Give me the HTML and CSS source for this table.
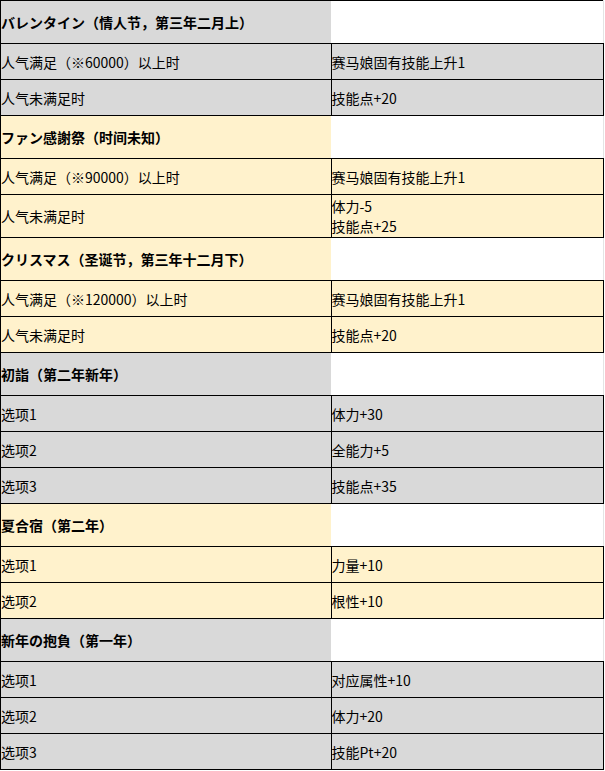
FILE: index.html
```html
<!DOCTYPE html>
<html lang="zh">
<head>
<meta charset="utf-8">
<title>活动事件</title>
<link rel="stylesheet" href="styles.css">
</head>
<body>
<table class="events">
  <tr class="head grey"><td class="name">バレンタイン（情人节，第三年二月上）</td><td class="blank"></td></tr>
  <tr class="row grey"><td>人气满足（※60000）以上时</td><td>赛马娘固有技能上升1</td></tr>
  <tr class="row grey"><td>人气未满足时</td><td>技能点+20</td></tr>

  <tr class="head cream"><td class="name">ファン感謝祭（时间未知）</td><td class="blank"></td></tr>
  <tr class="row cream"><td>人气满足（※90000）以上时</td><td>赛马娘固有技能上升1</td></tr>
  <tr class="row cream tall"><td>人气未满足时</td><td>体力-5<br>技能点+25</td></tr>

  <tr class="head cream"><td class="name">クリスマス（圣诞节，第三年十二月下）</td><td class="blank"></td></tr>
  <tr class="row cream"><td>人气满足（※120000）以上时</td><td>赛马娘固有技能上升1</td></tr>
  <tr class="row cream"><td>人气未满足时</td><td>技能点+20</td></tr>

  <tr class="head grey"><td class="name">初詣（第二年新年）</td><td class="blank"></td></tr>
  <tr class="row grey"><td>选项1</td><td>体力+30</td></tr>
  <tr class="row grey"><td>选项2</td><td>全能力+5</td></tr>
  <tr class="row grey"><td>选项3</td><td>技能点+35</td></tr>

  <tr class="head cream"><td class="name">夏合宿（第二年）</td><td class="blank"></td></tr>
  <tr class="row cream"><td>选项1</td><td>力量+10</td></tr>
  <tr class="row cream"><td>选项2</td><td>根性+10</td></tr>

  <tr class="head grey"><td class="name">新年の抱負（第一年）</td><td class="blank"></td></tr>
  <tr class="row grey"><td>选项1</td><td>对应属性+10</td></tr>
  <tr class="row grey"><td>选项2</td><td>体力+20</td></tr>
  <tr class="row grey"><td>选项3</td><td>技能Pt+20</td></tr>
</table>
</body>
</html>
```
FILE: styles.css
```css
html, body {
  margin: 0;
  padding: 0;
  background: #ffffff;
}

.events {
  border-collapse: collapse;
  width: 604px;
  table-layout: fixed;
  font-family: "Noto Sans CJK SC", "Noto Sans CJK JP", sans-serif;
  font-size: 14px;
  line-height: 20px;
  color: #000;
}

.events td {
  padding: 0;
  vertical-align: middle;
  border: 1px solid #000;
  white-space: nowrap;
  overflow: hidden;
}

.events td:first-child {
  width: 330px;
}

.row td {
  height: 35px;
}

.tall td {
  height: 42px;
}

.head td {
  height: 42px;
}

.head .name {
  font-weight: bold;
  border-right: none;
}

.head .blank {
  background: #ffffff;
  border-left: none;
  border-right: 1px solid #e4e4e4;
}

.grey td {
  background: #d9d9d9;
}

.cream td {
  background: #fff2cc;
}

.grey .blank,
.cream .blank {
  background: #ffffff;
}
```
